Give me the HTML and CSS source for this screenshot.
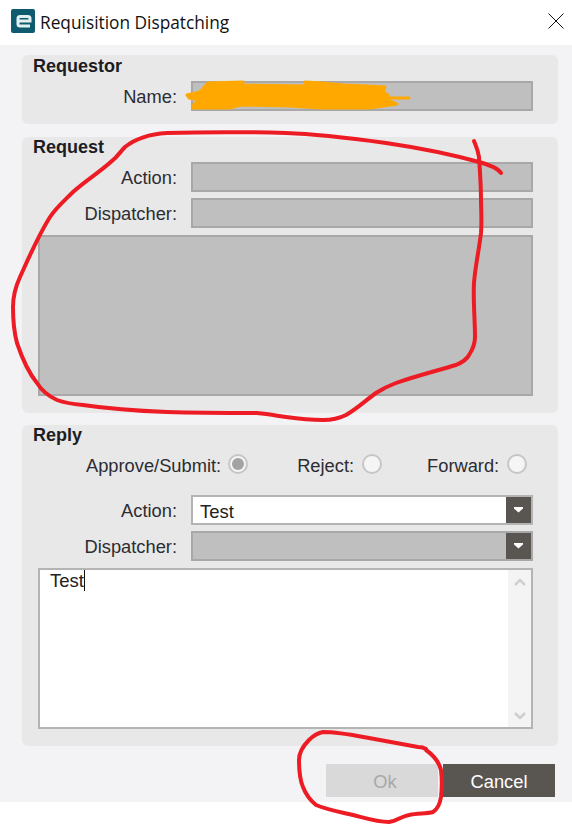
FILE: index.html
```html
<!DOCTYPE html>
<html lang="en">
<head>
    <meta charset="UTF-8">
    <title>Requisition Dispatching</title>
    <link rel="stylesheet" href="styles.css">
</head>
<body>
    <div class="window">
        <div class="title-bar">
            <svg class="logo" width="24" height="24" viewBox="0 0 24 24">
                <rect width="24" height="24" rx="2" fill="#0e5a6e"/>
                <path d="M7 12H19V9.5Q19 7.5 17 7.5H9Q7 7.5 7 9.5V15Q7 17 9 17H19" fill="none" stroke="#e2f0f1" stroke-width="3"/>
            </svg>
            <span class="title">Requisition Dispatching</span>
            <svg class="close" width="16" height="16" viewBox="0 0 16 16">
                <path d="M.5.5L15.5 15.5M15.5.5L.5 15.5" stroke="#111" stroke-width="1" fill="none"/>
            </svg>
        </div>

        <div class="dialog">
            <section class="panel panel-requestor">
                <h2>Requestor</h2>
                <div class="row">
                    <label>Name:</label>
                    <div class="field"></div>
                </div>
            </section>

            <section class="panel panel-request">
                <h2>Request</h2>
                <div class="row">
                    <label>Action:</label>
                    <div class="field"></div>
                </div>
                <div class="row">
                    <label>Dispatcher:</label>
                    <div class="field"></div>
                </div>
                <div class="memo"></div>
            </section>

            <section class="panel panel-reply">
                <h2>Reply</h2>
                <div class="radios">
                    <div class="radio-item">Approve/Submit:<span class="radio checked"></span></div>
                    <div class="radio-item">Reject:<span class="radio"></span></div>
                    <div class="radio-item">Forward:<span class="radio"></span></div>
                </div>
                <div class="row">
                    <label>Action:</label>
                    <div class="field select active">
                        <span class="value">Test</span>
                        <span class="arrow"><svg width="9" height="6" viewBox="0 0 9 6"><path d="M0 0H9V1.5L4.5 5.5L0 1.5Z" fill="#fff"/></svg></span>
                    </div>
                </div>
                <div class="row">
                    <label>Dispatcher:</label>
                    <div class="field select">
                        <span class="value"></span>
                        <span class="arrow"><svg width="9" height="6" viewBox="0 0 9 6"><path d="M0 0H9V1.5L4.5 5.5L0 1.5Z" fill="#fff"/></svg></span>
                    </div>
                </div>
                <div class="memo active">
                    <div class="memo-text"><span class="typed">Test</span></div>
                    <div class="scrollbar">
                        <svg width="12" height="8" viewBox="0 0 12 8"><path d="M1 7L6 2L11 7" fill="none" stroke="#cfcfcf" stroke-width="2.5"/></svg>
                        <svg width="12" height="8" viewBox="0 0 12 8"><path d="M1 1L6 6L11 1" fill="none" stroke="#cfcfcf" stroke-width="2.5"/></svg>
                    </div>
                </div>
            </section>

            <div class="buttons">
                <button class="btn-ok" disabled>Ok</button>
                <button class="btn-cancel">Cancel</button>
            </div>
        </div>
    </div>

    <!-- marks drawn on top of the screenshot -->
    <svg class="scribbles" width="572" height="825" viewBox="0 0 572 825">
        <path class="orange-fill" d="M187 95L200 92L208 83L243 82L243 85L307 86L305 82L323 83L343 85L367 86L385 87L383 92L388 95L388 100L397 104L370 108L320 108L290 106L240 105L230 108L193 108L194 104L200 100L189 98Z"/>
        <path class="orange-line" d="M385 98H409"/>
        <path class="red-line" d="M501 173C498 168 490 165 479 162C450 154 420 148 386 143C350 138 320 134 286 133C250 132 200 132 167 133C150 134 135 139 125 147C120 152 118 156 113 160C100 172 85 181 73 192C62 203 56 208 50 217C38 236 30 255 20 277C14 290 13 298 13 307C13 320 14 332 17 343C22 358 28 372 37 383C42 391 48 396 57 400C65 403 72 404 83 405C110 409 140 411 167 412C200 413 230 413 257 413C270 414 278 416 286 417C300 419 312 420 323 420C333 420 340 418 346 415C358 408 366 400 376 393C382 389 388 386 396 383C416 376 436 371 456 365C463 362 467 359 469 355C473 349 475 343 475 337C475 320 473 300 474 283C475 268 479 250 481 233C482 220 481 210 481 200C481 185 480 172 479 157C478 150 476 146 474 141"/>
        <path class="red-line" d="M426 749C423 747 421 747 418 747C402 744 385 741 369 738C353 735 338 732 323 732C317 733 313 736 309 740C303 746 299 752 299 760C299 770 300 780 303 787C306 795 310 800 316 805C328 810 340 812 353 815C365 818 377 822 389 822C397 821 402 816 409 815C418 813 426 814 433 812C438 809 440 803 441 797C442 788 442 778 441 770C439 762 433 755 426 750"/>
    </svg>
</body>
</html>
```

FILE: styles.css
```css
* {
    box-sizing: border-box;
}

html, body {
    margin: 0;
    height: 825px;
    overflow: hidden;
}

body {
    position: relative;
    background: #fff;
    font-family: "Liberation Sans", Arial, sans-serif;
    font-size: 18.3px;
    color: #2c2c33;
}

.title-bar {
    display: flex;
    align-items: center;
    height: 45px;
    padding: 0 8px 3px 11px;
    background: #fff;
}

.logo {
    flex: none;
}

.title {
    margin: 2px 0 0 5px;
    font-family: "Open Sans", sans-serif;
    font-size: 17.3px;
    color: #111;
}

.close {
    margin-left: auto;
}

.dialog {
    height: 757px;
    padding: 10px 14px 0 22px;
    background: #f3f3f5;
}

.panel {
    padding: 0 25px 0 0;
    background: #e8e8e8;
    border-radius: 6px;
}

.panel h2 {
    margin: 0;
    padding: 0 0 0 11px;
    height: 25px;
    font-size: 18px;
    line-height: 21px;
    font-weight: bold;
    color: #1c1c22;
}

.panel-requestor {
    height: 69px;
    margin-bottom: 13px;
}

.panel-requestor h2 {
    height: 26px;
    padding-top: 1px;
}

.panel-request {
    height: 276px;
    margin-bottom: 12px;
}

.panel-reply {
    height: 321px;
}

.row {
    display: flex;
    align-items: center;
    height: 30px;
    margin-bottom: 6px;
}

.row label {
    width: 155px;
    margin-right: 14px;
    padding-top: 2px;
    text-align: right;
}

.field {
    flex: 1;
    display: flex;
    height: 30px;
    background: #bfbfbf;
    border: 2px solid #a8a8a8;
}

.memo {
    display: flex;
    height: 161px;
    margin: 7px 0 0 16px;
    background: #bfbfbf;
    border: 2px solid #a8a8a8;
}

.radios {
    display: flex;
    align-items: center;
    height: 20px;
    margin: 5px 0 20px 64px;
    line-height: 22px;
}

.radio-item {
    display: flex;
    align-items: center;
    padding-top: 2px;
    margin-right: 45px;
}

.radio-item:first-child {
    margin-right: 49px;
}

.radio {
    display: flex;
    align-items: center;
    justify-content: center;
    width: 20px;
    height: 20px;
    margin: -4px 0 0 8px;
    background: #f5f5f5;
    border: 2px solid #c6c6c6;
    border-radius: 50%;
}

.radio.checked {
    margin-left: 7px;
}

.radio.checked::after {
    content: "";
    width: 12px;
    height: 12px;
    background: #a3a3a3;
    border-radius: 50%;
}

.select .value {
    flex: 1;
    padding: 2px 0 0 7px;
    font-size: 18.5px;
    line-height: 26px;
    color: #222;
}

.select .arrow {
    display: flex;
    align-items: center;
    justify-content: center;
    width: 25px;
    background: #595652;
}

.active {
    background: #fff;
    border-color: #b4b4b4;
}

.memo.active {
    margin-top: 7px;
}

.memo-text {
    flex: 1;
    padding: 0 0 0 10px;
    font-size: 18.5px;
    line-height: 21px;
    color: #222;
}

.typed {
    display: inline-block;
    border-right: 1px solid #111;
}

.scrollbar {
    display: flex;
    flex-direction: column;
    justify-content: space-between;
    align-items: center;
    width: 23px;
    padding: 8px 0 7px;
    background: #f4f4f4;
}

.buttons {
    display: flex;
    justify-content: flex-end;
    gap: 5px;
    margin: 18px 3px 0 0;
}

.buttons button {
    width: 112px;
    height: 33px;
    padding: 3px 0 0;
    border: none;
    font-family: "Liberation Sans", Arial, sans-serif;
    font-size: 18.3px;
}

.buttons .btn-ok {
    padding-left: 6px;
    background: #d9d9d9;
    color: #a8a8a8;
}

.btn-cancel {
    background: #595652;
    color: #fff;
}

.scribbles {
    position: absolute;
    top: 0;
    left: 0;
    pointer-events: none;
}

.orange-fill {
    fill: #ffa800;
    stroke: #ffa800;
    stroke-width: 3;
    stroke-linejoin: round;
}

.orange-line {
    fill: none;
    stroke: #ffa800;
    stroke-width: 3;
    stroke-linecap: round;
}

.red-line {
    fill: none;
    stroke: #ed1c24;
    stroke-width: 4;
    stroke-linecap: round;
    stroke-linejoin: round;
}
```
